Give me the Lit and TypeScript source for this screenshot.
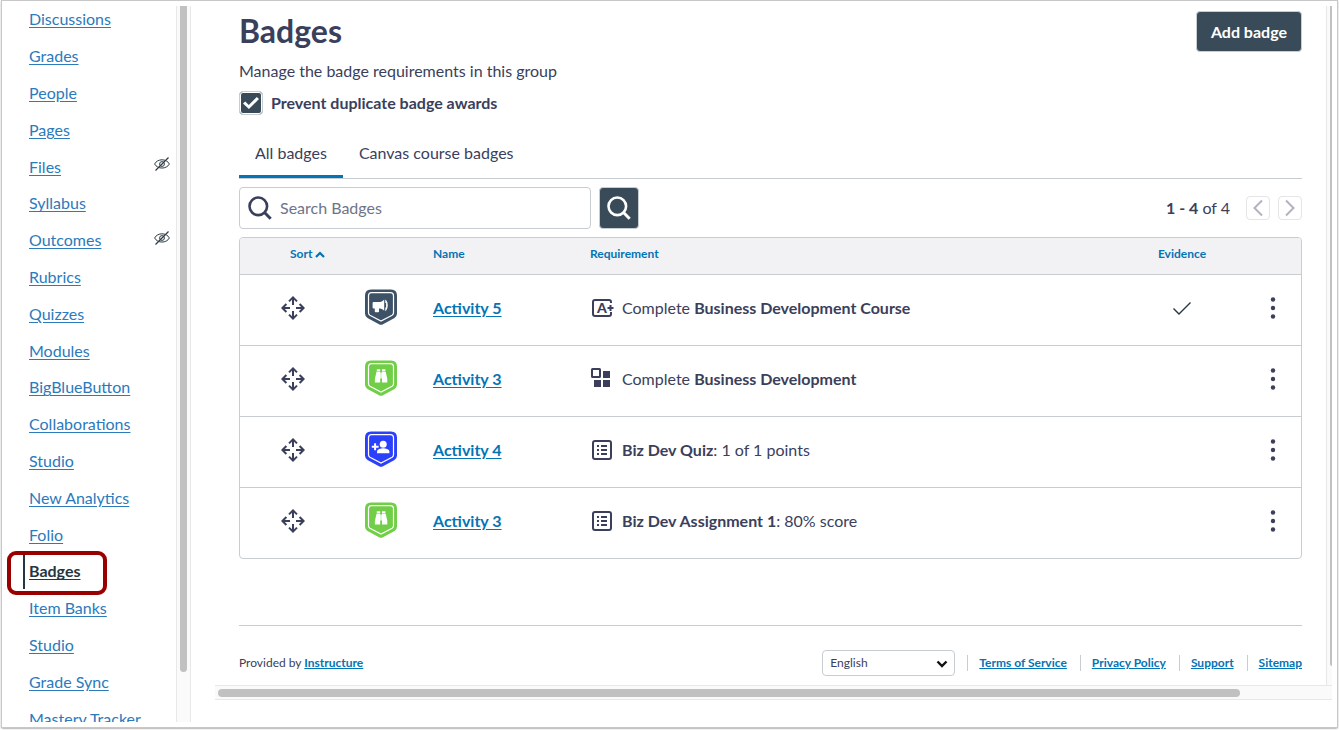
import { LitElement, html, css, svg, nothing } from "lit";
import { customElement } from "lit/decorators.js";
import { classMap } from "lit/directives/class-map.js";

interface NavItem {
  label: string;
  hidden?: boolean;
  active?: boolean;
}

const NAV: NavItem[] = [
  { label: "Discussions" },
  { label: "Grades" },
  { label: "People" },
  { label: "Pages" },
  { label: "Files", hidden: true },
  { label: "Syllabus" },
  { label: "Outcomes", hidden: true },
  { label: "Rubrics" },
  { label: "Quizzes" },
  { label: "Modules" },
  { label: "BigBlueButton" },
  { label: "Collaborations" },
  { label: "Studio" },
  { label: "New Analytics" },
  { label: "Folio" },
  { label: "Badges", active: true },
  { label: "Item Banks" },
  { label: "Studio" },
  { label: "Grade Sync" },
  { label: "Mastery Tracker" },
];

const ROWS = [
  { name: "Activity 5", color: "#3d5266", glyph: "horn", icon: "grade", pre: "Complete ", strong: "Business Development Course", post: "", evidence: true },
  { name: "Activity 3", color: "#70ce47", glyph: "binoculars", icon: "module", pre: "Complete ", strong: "Business Development", post: "", evidence: false },
  { name: "Activity 4", color: "#2b40fb", glyph: "person", icon: "list", pre: "", strong: "Biz Dev Quiz", post: ": 1 of 1 points", evidence: false },
  { name: "Activity 3", color: "#70ce47", glyph: "binoculars", icon: "list", pre: "", strong: "Biz Dev Assignment 1", post: ": 80% score", evidence: false },
];

const GLYPHS: Record<string, unknown> = {
  horn: svg`<path fill="#fff" d="M8.600 13q-1 0-1 1v4.600q0 1 1 1h1.200v2.800q0 .8.800.8h2.600q.8 0 .8-.8v-2.800h1c1.500.2 2.900.9 4.200 2.200V10.400c-1.300 1.500-2.700 2.400-4.200 2.600zM20.300 10.600c3.300 1.700 3.300 10 0 11.600v-3.700h.8v-4.400h-.8z"/>`,
  binoculars: svg`<path fill="#fff" d="M11.800 9.200h3.400v2h-3.400zM17 9.200h3.400v2H17zM11.500 11.700h3.700v10.900H9.900v-3.800zM17 11.700h3.700l1.600 7.100v3.800H17zM15.400 12.600h1.400v6h-1.400z"/>`,
  person: svg`<path fill="#fff" d="M9.100 12.300h2v2.500h2.500v2h-2.500v2.500h-2v-2.500H6.800v-2h2.300z"/><circle cx="18.200" cy="13.200" r="3.500" fill="#fff"/><path fill="#fff" d="M12 22.200v-1.700c0-2.400 4-3.300 6.200-3.300s6.200.9 6.200 3.300v1.700z"/>`,
};

const shield = (color: string, glyph: string) => html`
  <svg class="shield" viewBox="0 0 32 36" aria-hidden="true">
    <path fill=${color} d="M6 .6h20Q32 .6 32 6.600v17.900q0 3-2.500 4.500L18 35.200q-2 1-4 0L2.500 29Q0 27.500 0 24.500V6.600Q0 .6 6 .6z"/>
    <path fill="none" stroke="#fff" stroke-width="1.200" d="M6.500 3.700h19q3 0 3 3v17.100q0 1.600-1.400 2.400L16 32.100 4.900 26.200q-1.400-.8-1.400-2.400V6.700q0-3 3-3z"/>
    ${GLYPHS[glyph]}
  </svg>`;

const magnifier = html`
  <svg class="magnifier" viewBox="0 0 24 24" aria-hidden="true">
    <circle cx="10.300" cy="10.300" r="8.800" fill="none" stroke="currentColor" stroke-width="2.600"/>
    <path d="M16.500 16.500l6.200 6.200" fill="none" stroke="currentColor" stroke-width="3"/>
  </svg>`;

const moveIcon = html`
  <svg class="icon-24" viewBox="0 0 24 24" aria-hidden="true">
    <g fill="none" stroke="currentColor" stroke-width="2">
      <path d="M12 9V2M12 15v7M9 12H2M15 12h7"/>
      <path d="M8 5.400L12 1.400l4 4M8 18.600l4 4 4-4M5.400 8L1.400 12l4 4M18.600 8l4 4-4 4"/>
    </g>
  </svg>`;

const hiddenIcon = html`
  <svg class="hidden-icon" viewBox="0 0 16 16" role="img" aria-label="Hidden from students">
    <g fill="none" stroke="currentColor">
      <path d="M.6 8C3.500 2.400 12.500 2.400 15.400 8 12.500 13.400 3.500 13.400.6 8z"/>
      <circle cx="8" cy="8" r="2.400"/>
      <path d="M1.500 14.500l13-13" stroke-width="1.200"/>
    </g>
  </svg>`;

const REQ_ICONS: Record<string, unknown> = {
  grade: html`
    <svg class="icon-24" viewBox="0 0 24 24" aria-hidden="true">
      <path fill="none" stroke="currentColor" stroke-width="2" d="M21 7V6q0-2-2-2H5Q3 4 3 6v12q0 2 2 2h14q2 0 2-2v-2"/>
      <path fill="none" stroke="currentColor" stroke-width="2" d="M20.500 9v6M17.500 12h6"/>
      <text class="grade-letter" x="12" y="17" text-anchor="middle">A</text>
    </svg>`,
  module: html`
    <svg class="icon-24" viewBox="0 0 24 24" aria-hidden="true">
      <rect x="2" y="2" width="8" height="8" fill="none" stroke="currentColor" stroke-width="2" rx=".5"/>
      <path fill="currentColor" d="M13 4h7v7h-7zM4 13h7v7H4zM13 13h7v7h-7z"/>
    </svg>`,
  list: html`
    <svg class="icon-24" viewBox="0 0 24 24" aria-hidden="true">
      <rect x="3" y="3" width="18" height="18" rx="2" fill="none" stroke="currentColor" stroke-width="2"/>
      <path fill="currentColor" d="M7 7h2v2H7zM7 11h2v2H7zM7 15h2v2H7zM11 7h6v2h-6zM11 11h6v2h-6zM11 15h6v2h-6z"/>
    </svg>`,
};

const shared = css`
  :host,
  *,
  *::before,
  *::after {
    box-sizing: border-box;
  }
  svg {
    display: block;
    flex: none;
  }
  ul {
    list-style: none;
    margin: 0;
    padding: 0;
  }
`;

@customElement("course-nav")
export class CourseNav extends LitElement {
  static styles = [
    shared,
    css`
      :host {
        display: flex;
        overflow: hidden;
      }
      .nav {
        display: flex;
        flex: 1;
      }
      .list {
        flex: 1;
        display: grid;
        grid-auto-rows: 1fr;
        margin: -5px 0 -15px;
      }
      .item {
        position: relative;
        display: flex;
        align-items: center;
        justify-content: space-between;
        padding: 0 6px 0 27px;
      }
      .link {
        color: #2b7abc;
        font-size: 16px;
        line-height: 20px;
        text-underline-offset: 2px;
      }
      .active .link {
        color: #273540;
        font-weight: 700;
      }
      .active::before {
        content: "";
        position: absolute;
        left: 21px;
        top: 1px;
        bottom: 1px;
        width: 2px;
        background: #273540;
      }
      .active::after {
        content: "";
        position: absolute;
        left: 5px;
        top: -2px;
        width: 100px;
        height: 44px;
        border: 4px solid #900;
        border-radius: 9px;
        pointer-events: none;
      }
      .hidden-icon {
        width: 16px;
        height: 16px;
        margin-bottom: 5px;
        color: #2d3b45;
      }
      .scrollbar {
        width: 15px;
        padding: 0 3px;
        background: #fafafa;
        border: solid #e8e8e8;
        border-width: 0 1px;
      }
      .thumb {
        height: 93%;
        background: #c1c1c1;
        border-radius: 0 0 4px 4px;
      }
    `,
  ];

  render() {
    return html`
      <nav class="nav" aria-label="Course navigation">
        <ul class="list">
          ${NAV.map(
            (n) => html`<li class=${classMap({ item: true, active: !!n.active })}>
              <a class="link" href="#">${n.label}</a>${n.hidden ? hiddenIcon : nothing}
            </li>`
          )}
        </ul>
      </nav>
      <div class="scrollbar"><div class="thumb"></div></div>
    `;
  }
}

@customElement("badge-table")
export class BadgeTable extends LitElement {
  static styles = [
    shared,
    css`
      :host {
        display: block;
        border: 1px solid #c7cdd1;
        border-radius: 4px;
        overflow: hidden;
      }
      .table {
        width: 100%;
        table-layout: fixed;
        border-collapse: separate;
        border-spacing: 0;
      }
      .head {
        height: 36px;
        padding: 0 8px 4px;
        background: #f2f2f4;
        color: #0374b5;
        font-size: 12px;
        line-height: 16px;
        font-weight: 700;
        text-align: left;
      }
      .cell {
        height: 71px;
        padding: 0 8px 4px;
        border-top: 1px solid #c7cdd1;
        font-size: 16px;
        line-height: 24px;
      }
      .col-sort {
        width: 105px;
      }
      .col-badge {
        width: 80px;
      }
      .col-name {
        width: 157px;
      }
      .col-evidence {
        width: 124px;
      }
      .col-menu {
        width: 57px;
      }
      .head.sort {
        padding-left: 50px;
      }
      .cell.sort {
        padding-left: 41px;
      }
      .cell.badge {
        padding: 0 20px 6px;
      }
      .head.center {
        text-align: center;
      }
      .sort-button {
        display: flex;
        align-items: center;
        gap: 3px;
        padding: 0;
        border: 0;
        background: none;
        color: inherit;
        font: inherit;
      }
      .icon-button {
        display: block;
        padding: 0;
        border: 0;
        background: none;
        color: inherit;
      }
      .center .icon-button,
      .center svg {
        margin: 0 auto;
      }
      .link {
        color: #0374b5;
        font-weight: 700;
        text-underline-offset: 2px;
      }
      .requirement {
        display: flex;
        align-items: center;
        gap: 8px;
      }
      .icon-24 {
        width: 24px;
        height: 24px;
      }
      .grade-letter {
        font: 900 14px Lato, sans-serif;
        fill: currentColor;
      }
      .shield {
        width: 32px;
        height: 36px;
      }
      .check {
        width: 20px;
        height: 16px;
        color: #273540;
      }
      .sort-arrow {
        width: 10px;
        height: 7px;
      }
    `,
  ];

  render() {
    return html`
      <table class="table">
        <colgroup>
          <col class="col-sort" />
          <col class="col-badge" />
          <col class="col-name" />
          <col />
          <col class="col-evidence" />
          <col class="col-menu" />
        </colgroup>
        <thead>
          <tr>
            <th class="head sort" scope="col">
              <button class="sort-button" type="button">
                Sort
                <svg class="sort-arrow" viewBox="0 0 10 7" aria-hidden="true">
                  <path d="M1 6l4-4 4 4" fill="none" stroke="currentColor" stroke-width="2.200"/>
                </svg>
              </button>
            </th>
            <th class="head"></th>
            <th class="head" scope="col">Name</th>
            <th class="head" scope="col">Requirement</th>
            <th class="head center" scope="col">Evidence</th>
            <th class="head"></th>
          </tr>
        </thead>
        <tbody>
          ${ROWS.map(
            (r) => html`<tr>
              <td class="cell sort">
                <button class="icon-button" type="button" aria-label="Move">${moveIcon}</button>
              </td>
              <td class="cell badge">${shield(r.color, r.glyph)}</td>
              <td class="cell"><a class="link" href="#">${r.name}</a></td>
              <td class="cell">
                <div class="requirement">
                  ${REQ_ICONS[r.icon]}
                  <span>${r.pre}<strong>${r.strong}</strong>${r.post}</span>
                </div>
              </td>
              <td class="cell center">
                ${r.evidence
                  ? html`<svg class="check" viewBox="0 0 20 16" role="img" aria-label="Yes">
                      <path d="M1.500 8.500l5.500 5.500L18.500 2.500" fill="none" stroke="currentColor" stroke-width="1.400"/>
                    </svg>`
                  : nothing}
              </td>
              <td class="cell center">
                <button class="icon-button" type="button" aria-label="Options">
                  <svg class="icon-24" viewBox="0 0 24 24" aria-hidden="true">
                    <g fill="currentColor">
                      <circle cx="12" cy="3.500" r="2.200"/>
                      <circle cx="12" cy="12" r="2.200"/>
                      <circle cx="12" cy="20.500" r="2.200"/>
                    </g>
                  </svg>
                </button>
              </td>
            </tr>`
          )}
        </tbody>
      </table>
    `;
  }
}

@customElement("app-root")
export class AppRoot extends LitElement {
  static styles = [
    shared,
    css`
      :host {
        display: flex;
        height: 100vh;
        padding: 1px 2px 3px;
        background: #fff;
        color: #3a405b;
        font-family: Lato, sans-serif;
        font-size: 16px;
        line-height: 24px;
      }
      .frame {
        flex: 1;
        min-width: 0;
        display: flex;
        padding: 5px 5px 5px 0;
        background: #fff;
        box-shadow: 0 0 1px 1px #c8c8c8, 0 1px 2px #444;
      }
      .sidebar {
        flex: 0 0 189px;
      }
      .content {
        flex: 1;
        min-width: 0;
        display: flex;
        flex-direction: column;
        margin-left: 24px;
      }
      .pane {
        display: flex;
      }
      .page {
        flex: 1;
        min-width: 0;
        padding: 5px 24px 9px;
      }
      .track-y {
        width: 6px;
        padding-left: 3px;
        background: #fafafa;
        border-left: 1px solid #e8e8e8;
      }
      .thumb-y {
        height: calc(100% - 19px);
        background: #c1c1c1;
        border-radius: 0 0 0 4px;
      }
      .track-x {
        height: 15px;
        padding: 3px;
        background: #fafafa;
        border: solid #e8e8e8;
        border-width: 1px 0;
      }
      .thumb-x {
        width: 92%;
        height: 8px;
        border-radius: 4px;
        background: #c1c1c1;
      }
      .header {
        display: flex;
        justify-content: space-between;
        align-items: flex-start;
      }
      .title {
        margin: 0;
        font-size: 32px;
        line-height: 40px;
        font-weight: 700;
      }
      .add {
        height: 41px;
        padding: 0 14px;
        border: 1px solid #c7cdd1;
        border-radius: 4px;
        background: #394b58;
        color: #fff;
        font: 700 16px/24px Lato, sans-serif;
      }
      .description {
        margin: 7px 0 8px;
      }
      .option {
        display: flex;
        align-items: center;
        gap: 8px;
        font-weight: 700;
      }
      .checkbox {
        appearance: none;
        display: grid;
        place-items: center;
        width: 24px;
        height: 24px;
        margin: 0;
        border: 1px solid #c7cdd1;
        border-radius: 4px;
        background: #394b58;
        box-shadow: inset 0 0 0 1px #fff;
      }
      .checkbox::before {
        content: "";
        width: 16px;
        height: 13px;
        background: #fff;
        clip-path: polygon(0 54%, 14% 38%, 36% 65%, 86% 4%, 100% 20%, 37% 96%);
      }
      .tabs {
        display: flex;
        height: 50px;
        margin: 14px 0 8px;
        border-bottom: 1px solid #c7cdd1;
      }
      .tab {
        padding: 2px 16px 0;
        border: 0;
        border-bottom: 3px solid transparent;
        background: none;
        color: inherit;
        font: inherit;
      }
      .tab.selected {
        border-bottom-color: #0374b5;
      }
      .toolbar {
        display: flex;
        align-items: center;
        justify-content: space-between;
        margin-bottom: 8px;
      }
      .search {
        display: flex;
        gap: 8px;
      }
      .field {
        display: flex;
        align-items: center;
        gap: 8px;
        width: 352px;
        height: 42px;
        padding: 0 8px;
        border: 1px solid #c7cdd1;
        border-radius: 4px;
      }
      .input {
        flex: 1;
        min-width: 0;
        padding: 0;
        border: 0;
        outline: 0;
        background: none;
        color: inherit;
        font: inherit;
      }
      .input::placeholder {
        color: #6f7389;
        opacity: 1;
      }
      .search-button {
        display: grid;
        place-items: center;
        width: 40px;
        height: 42px;
        padding: 0;
        border: 1px solid #c7cdd1;
        border-radius: 4px;
        background: #394b58;
        color: #fff;
      }
      .magnifier {
        width: 24px;
        height: 24px;
      }
      .pager {
        display: flex;
        align-items: center;
        gap: 8px;
      }
      .range {
        margin-right: 8px;
      }
      .page-button {
        width: 24px;
        height: 24px;
        padding: 0;
        border: 1px solid #e3e5e8;
        border-radius: 4px;
        background: #fff;
        color: #b0b3c0;
      }
      .chevron {
        width: 22px;
        height: 22px;
      }
      .footer {
        display: flex;
        align-items: center;
        justify-content: space-between;
        margin-top: 66px;
        padding-top: 24px;
        border-top: 1px solid #c7cdd1;
        font-size: 12px;
        line-height: 16px;
      }
      .link {
        color: #0374b5;
        font-weight: 700;
        text-underline-offset: 1px;
      }
      .legal {
        display: flex;
        align-items: center;
      }
      .language {
        position: relative;
        display: flex;
        margin-right: 12px;
      }
      .select {
        appearance: none;
        width: 133px;
        height: 26px;
        padding: 0 7px;
        border: 1px solid #c7cdd1;
        border-radius: 4px;
        background: #fff;
        color: inherit;
        font: inherit;
      }
      .arrow {
        position: absolute;
        right: 7px;
        top: 10px;
        width: 12px;
        height: 8px;
        color: #111;
        pointer-events: none;
      }
      .links {
        display: flex;
        gap: 13px;
      }
      .entry {
        padding-left: 11px;
        border-left: 1px solid #c7cdd1;
      }
    `,
  ];

  render() {
    return html`
      <div class="frame">
        <course-nav class="sidebar"></course-nav>
        <div class="content">
          <div class="pane">
            <main class="page">
              <header class="header">
                <h1 class="title">Badges</h1>
                <button class="add" type="button">Add badge</button>
              </header>
              <p class="description">Manage the badge requirements in this group</p>
              <label class="option">
                <input class="checkbox" type="checkbox" checked />
                Prevent duplicate badge awards
              </label>
              <div class="tabs" role="tablist">
                <button class="tab selected" type="button" role="tab" aria-selected="true">All badges</button>
                <button class="tab" type="button" role="tab" aria-selected="false">Canvas course badges</button>
              </div>
              <div class="toolbar">
                <div class="search">
                  <label class="field">
                    ${magnifier}
                    <input class="input" type="text" placeholder="Search Badges" aria-label="Search Badges" />
                  </label>
                  <button class="search-button" type="button" aria-label="Search">${magnifier}</button>
                </div>
                <div class="pager">
                  <span class="range"><strong>1 - 4</strong> of 4</span>
                  <button class="page-button" type="button" aria-label="Previous page">
                    <svg class="chevron" viewBox="0 0 22 22" aria-hidden="true">
                      <path d="M15 3.500L7.500 11l7.500 7.500" fill="none" stroke="currentColor" stroke-width="2"/>
                    </svg>
                  </button>
                  <button class="page-button" type="button" aria-label="Next page">
                    <svg class="chevron" viewBox="0 0 22 22" aria-hidden="true">
                      <path d="M7 3.500l7.500 7.500L7 18.500" fill="none" stroke="currentColor" stroke-width="2"/>
                    </svg>
                  </button>
                </div>
              </div>
              <badge-table></badge-table>
              <footer class="footer">
                <span>Provided by <a class="link" href="#">Instructure</a></span>
                <div class="legal">
                  <div class="language">
                    <select class="select" aria-label="Language">
                      <option>English</option>
                    </select>
                    <svg class="arrow" viewBox="0 0 12 8" aria-hidden="true">
                      <path d="M1.500 1.500L6 6l4.500-4.500" fill="none" stroke="currentColor" stroke-width="2.400"/>
                    </svg>
                  </div>
                  <ul class="links">
                    ${["Terms of Service", "Privacy Policy", "Support", "Sitemap"].map(
                      (t) => html`<li class="entry"><a class="link" href="#">${t}</a></li>`
                    )}
                  </ul>
                </div>
              </footer>
            </main>
            <div class="track-y"><div class="thumb-y"></div></div>
          </div>
          <div class="track-x"><div class="thumb-x"></div></div>
        </div>
      </div>
    `;
  }
}
